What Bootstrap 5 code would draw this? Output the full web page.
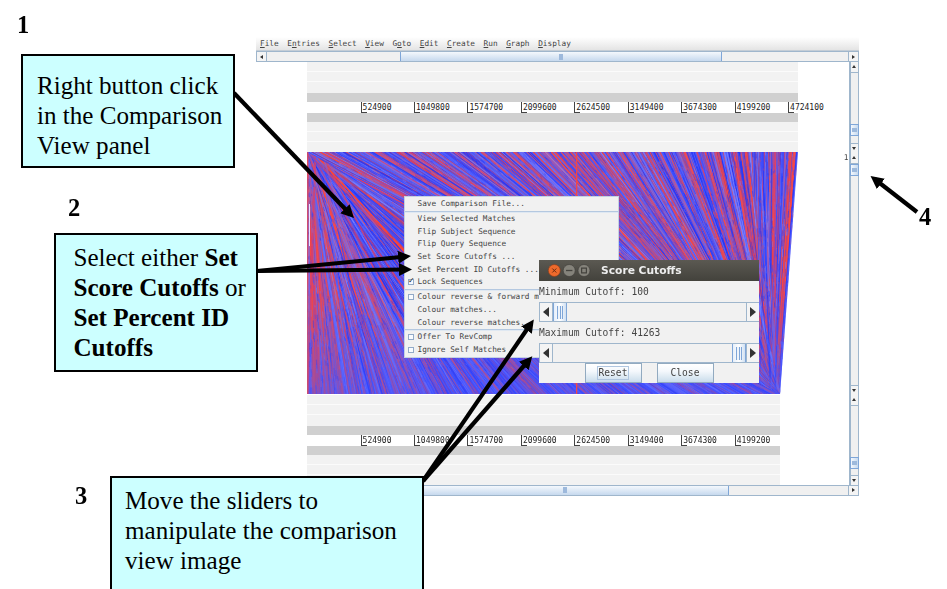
<!DOCTYPE html>
<html lang="en">
<head>
<meta charset="utf-8">
<title>Comparison view: score cutoffs</title>
<link href="https://cdn.jsdelivr.net/npm/bootstrap@5.3.0/dist/css/bootstrap.min.css" rel="stylesheet">
<style>
body{width:947px;height:589px;overflow:hidden;background:#fff;color:#000}
.slide{width:947px;height:589px}
.note{background:#cff;border:2px solid #000;font:25.1px/30px "Liberation Serif",serif;white-space:nowrap;z-index:5}
.note1{left:21px;top:54px;width:214px;height:114px;padding:15px 0 0 14px}
.note2{left:54px;top:233px;width:204px;height:139px;padding:8px 0 0 17.5px}
.note3{left:110px;top:476px;width:314px;height:125px;padding:8px 0 0 13px}
.num{font:bold 24.5px/26px "Liberation Serif",serif;z-index:5}
.arrows{left:0;top:0;z-index:4}
.mono{font-family:"DejaVu Sans Mono",monospace;font-size:7.75px;color:#444;white-space:nowrap}
.appwin{left:256px;top:37px;width:603px;height:459px}
.menus{height:14px;padding:1px 0 0 4px;gap:8.6px;background:linear-gradient(#fff,#e4e4e4);border-bottom:1px solid #c4cdd6}
.menus u{text-underline-offset:1px}
.hbar{height:11px;background:#f0f0f0;border:1px solid #9fb6cc;border-width:1px 0}
.hbar2{height:10.5px}
.cell{flex:none;background:#f4f4f4;display:flex;align-items:center;justify-content:center}
.hbar .cell{width:11px;border:1px solid #9fb6cc;border-width:0 1px}
.hthumb{background:linear-gradient(#f4f8fd,#c6d9ee);border:1px solid #7fa6d8;border-width:0 1px;display:flex;align-items:center;justify-content:center}
.hthumb i{width:4px;height:6px;background:#9db9dc}
.views{height:423px}
.vbar{width:10.5px;background:#f0f0f0;border:1px solid #9fb6cc;border-width:0 1px 0 2px}
.vbar .cell{height:10.5px;border-bottom:1px solid #9fb6cc}
.vbar .cell.dn{border:0;border-top:1px solid #9fb6cc}
.vthumb{flex:none;height:12px;margin-right:-1px;margin-left:-1px;background:linear-gradient(90deg,#f4f8fd,#c6d9ee);border:1px solid #7fa6d8;display:flex;align-items:center;justify-content:center}
.vthumb i{width:5px;height:4px;background:#9db9dc}
.tri{width:0;height:0;border:2.5px solid transparent}
.tri.up{border-bottom:3px solid #333;border-top:0}
.tri.down{border-top:3px solid #333;border-bottom:0}
.tri.left{border-right:3px solid #333;border-left:0}
.tri.right{border-left:3px solid #333;border-right:0}
.seqpanel{height:90px;margin-left:51px}
.lane{height:10px;background:#f2f2f2;border-bottom:1px solid #fbfbfb}
.lane.lastlane{height:11px;border:0}
.dark{height:9px;background:#d0d0d0}
.ruler{height:11px;padding-left:53.6px;background:#fff}
.ruler span{flex:none;width:53.44px;font-size:8px;line-height:12px;height:11px;padding-left:1px;color:#222;border-left:1px solid #444;background:linear-gradient(#444,#444) 0 100%/5px 1px no-repeat}
.compare{height:243px;padding-left:51px}
.popup{left:404px;top:196px;width:215px;height:162px;background:#f1f1f1;border:1px solid #c3d0e2;z-index:2;padding-top:1px}
.popup div{height:12.7px;line-height:12.8px;padding-left:12.5px;position:relative}
.popup hr{margin:0;height:2.2px;border:0;border-top:1px solid #b4c8e0;background:#dfe8f2;opacity:1}
.popup .chk::before{content:"";position:absolute;left:3px;top:2.5px;width:6px;height:6px;border:1px solid #92aac8;background:#f8fbff}
.popup .on::after{content:"✓";position:absolute;left:3px;top:-1px;font:bold 8px/12px "DejaVu Sans",sans-serif;color:#222}
.dialogbox{left:539px;top:260px;width:220px;height:123px;background:#f1f1f1;z-index:3}
.titlebar{height:21px;background:linear-gradient(#5b5952,#43423c);padding-left:8px;gap:1px;color:#eee;font:bold 10.7px/19px "DejaVu Sans",sans-serif}
.lab{font-size:9.6px;height:21px;line-height:21px}
.slider{height:20px;border:1px solid #9fb6cc;border-width:1px 0 1px 1px}
.slider .cell{width:12px}
.track{border:1px solid #9fb6cc;margin:-1px 0}
.slider .hthumb{width:14px;background:linear-gradient(90deg,#e6effa,#fff 50%,#d0e0f2)}
.slider .hthumb i{width:6px;height:13px;background:repeating-linear-gradient(90deg,#7fa6d8 0 1px,#eef4fb 1px 2.5px)}
.slider .tri{border-width:5px}
.slider .tri.left{border-left:0;border-right-width:6px}
.slider .tri.right{border-right:0;border-left-width:6px}
.swbtn{width:57px;height:20px;border:1px solid #92aac0;background:linear-gradient(#fff,#f4f8fc 40%,#c9dceb);font-size:9.6px;display:flex;align-items:center;justify-content:center}
.swbtn span{padding:0 1px;line-height:12px}
.swbtn .foc{outline:1px solid #b0c6e0}
</style>
<script src="https://cdn.jsdelivr.net/npm/bootstrap@5.3.0/dist/js/bootstrap.bundle.min.js"></script>
</head>
<body>
<div class="slide position-relative overflow-hidden">
  <div class="num position-absolute" style="left:17px;top:12px">1</div>
  <div class="num position-absolute" style="left:68px;top:195px">2</div>
  <div class="num position-absolute" style="left:75px;top:483px">3</div>
  <div class="num position-absolute" style="left:919px;top:204px">4</div>
  <div class="note note1 position-absolute">Right button click<br>in the Comparison<br>View panel</div>
  <div class="note note2 position-absolute">Select either <b>Set</b><br><b>Score Cutoffs</b> or<br><b>Set Percent ID</b><br><b>Cutoffs</b></div>
  <div class="note note3 position-absolute">Move the sliders to<br>manipulate the comparison<br>view image</div>

  <div class="appwin mono position-absolute d-flex flex-column">
    <div class="menus d-flex align-items-center"><span><u>F</u>ile</span><span>E<u>n</u>tries</span><span><u>S</u>elect</span><span><u>V</u>iew</span><span>G<u>o</u>to</span><span><u>E</u>dit</span><span><u>C</u>reate</span><span><u>R</u>un</span><span><u>G</u>raph</span><span><u>D</u>isplay</span></div>
    <div class="hbar d-flex"><div class="cell"><b class="tri left"></b></div><div style="width:133px"></div><div class="hthumb" style="width:322px"><i></i></div><div class="cell ms-auto"><b class="tri right"></b></div></div>
    <div class="views d-flex">
      <div class="flex-grow-1 bg-white">
        <div class="seqpanel" style="width:491px">
          <div class="lane"></div><div class="lane"></div><div class="lane lastlane"></div><div class="dark"></div>
          <div class="ruler d-flex"><span>524900</span><span>1049800</span><span>1574700</span><span>2099600</span><span>2624500</span><span>3149400</span><span>3674300</span><span>4199200</span><span>4724100</span></div>
          <div class="dark"></div><div class="lane"></div><div class="lane"></div><div class="lane lastlane"></div>
        </div>
        <div class="compare d-flex"><canvas id="matches" width="491" height="243"></canvas><span class="ms-auto">1</span></div>
        <div class="seqpanel" style="width:473px">
          <div class="lane"></div><div class="lane"></div><div class="lane lastlane"></div><div class="dark"></div>
          <div class="ruler d-flex"><span>524900</span><span>1049800</span><span>1574700</span><span>2099600</span><span>2624500</span><span>3149400</span><span>3674300</span><span>4199200</span></div>
          <div class="dark"></div><div class="lane"></div><div class="lane"></div><div class="lane lastlane"></div>
        </div>
      </div>
      <div class="d-flex flex-column">
        <div class="vbar d-flex flex-column" style="height:91px"><div class="cell"><b class="tri up"></b></div><div style="height:51px"></div><div class="vthumb"><i></i></div><div class="cell dn mt-auto"><b class="tri down"></b></div></div>
        <div class="vbar d-flex flex-column" style="height:242px"><div class="cell"><b class="tri up"></b></div><div class="vthumb"><i></i></div><div class="cell dn mt-auto"><b class="tri down"></b></div></div>
        <div class="vbar d-flex flex-column" style="height:90px"><div class="cell"><b class="tri up"></b></div><div style="height:51px"></div><div class="vthumb"><i></i></div><div class="cell dn mt-auto"><b class="tri down"></b></div></div>
      </div>
    </div>
    <div class="hbar hbar2 d-flex"><div class="cell"><b class="tri left"></b></div><div style="width:133px"></div><div class="hthumb" style="width:329px"><i></i></div><div class="cell ms-auto"><b class="tri right"></b></div></div>
  </div>

  <div class="popup mono position-absolute"><div>Save Comparison File...</div><hr><div>View Selected Matches</div><div>Flip Subject Sequence</div><div>Flip Query Sequence</div><div>Set Score Cutoffs ...</div><div>Set Percent ID Cutoffs ...</div><div class="chk on">Lock Sequences</div><hr><div class="chk">Colour reverse &amp; forward m</div><div>Colour matches...</div><div>Colour reverse matches...</div><hr><div class="chk">Offer To RevComp</div><div class="chk">Ignore Self Matches</div></div>

  <div class="dialogbox mono position-absolute">
    <div class="titlebar d-flex align-items-center">
      <svg width="45" height="16" viewBox="0 0 45 16"><circle cx="7.3" cy="7.5" r="6" fill="#ee6a2c" stroke="#8a3a1a" stroke-width=".6"/><path d="M5.300 5.500l4 4m0-4l-4 4" stroke="#6a2c12" stroke-width="1"/><circle cx="22.2" cy="7.5" r="6" fill="#85837b" stroke="#3c3b37" stroke-width=".6"/><path d="M19 7.500h6.400" stroke="#44433e" stroke-width="1.3"/><circle cx="37" cy="7.5" r="6" fill="#85837b" stroke="#3c3b37" stroke-width=".6"/><path d="M34.600 5.100h4.800v4.800h-4.800z" fill="none" stroke="#44433e" stroke-width="1.2"/></svg>
      <span class="ps-2">Score Cutoffs</span>
    </div>
    <div class="lab">Minimum Cutoff: 100</div>
    <div class="slider d-flex"><div class="cell"><b class="tri left"></b></div><div class="track d-flex flex-grow-1"><div class="hthumb"><i></i></div></div><div class="cell"><b class="tri right"></b></div></div>
    <div class="lab">Maximum Cutoff: 41263</div>
    <div class="slider d-flex"><div class="cell"><b class="tri left"></b></div><div class="track d-flex flex-grow-1 justify-content-end"><div class="hthumb"><i></i></div></div><div class="cell"><b class="tri right"></b></div></div>
    <div class="d-flex justify-content-center" style="gap:15px"><div class="swbtn"><span class="foc">Reset</span></div><div class="swbtn"><span>Close</span></div></div>
  </div>

  <svg class="arrows position-absolute" width="947" height="589" viewBox="0 0 947 589">
    <defs><marker id="head" markerUnits="userSpaceOnUse" markerWidth="14" markerHeight="14" refX="8" refY="7" orient="auto"><path d="M0 .5L13 7 0 13.500z"/></marker></defs>
    <g stroke="#000" stroke-width="4.200" fill="none">
      <path marker-end="url(#head)" d="M234 93L350.500 214.500"/><path marker-end="url(#head)" d="M257 271L406 256.500"/><path marker-end="url(#head)" d="M257 271L407 269.500"/>
      <path marker-end="url(#head)" d="M423 481L531 323.500"/><path marker-end="url(#head)" d="M423 481L529 360"/><path marker-end="url(#head)" d="M917 212L874.500 179"/>
    </g>
  </svg>
</div>
<script>
// Match lines fan out of the top-left corner and converge on the bottom-right one.
(function(){
  var c=document.getElementById('matches').getContext('2d'),W=491,B=473,H=242,s=20117;
  function r(){s=(s*16807)%2147483647;return s/2147483647}
  c.beginPath();c.moveTo(0,0);c.lineTo(W,0);c.lineTo(B,H);c.lineTo(0,H);c.closePath();c.clip();
  c.fillStyle='#5058fa';c.fillRect(0,0,W,H);
  var blues=['#1c34ff','#3448ff','#5062ff','#6470ff','#7880ff','#2834ee','#4450ff'],reds=['#ff4434','#ff4a40','#d8406c','#9c58b8','#f04a50'];
  var bands=[];for(var k=0;k<200;k++)bands.push(.3+r()*1.4);
  function line(a,b,red,w,al){
    c.strokeStyle=(red?reds:blues)[Math.floor(r()*(red?5:7))];
    c.globalAlpha=al;c.lineWidth=w;c.beginPath();c.moveTo(a,0);c.lineTo(b,H);c.stroke();
  }
  function fan(up){
    c.save();c.beginPath();c.moveTo(0,0);
    if(up){c.lineTo(W,0);c.lineTo(B,H)}else{c.lineTo(B,H);c.lineTo(0,H)}
    c.closePath();c.clip();
    for(var i=0;i<1900;i++){
      var t=r(),j=Math.pow(r(),3)*16,p=up?.42:(t<.08?.7:.46-.3*t);
      var a=up?t*W:j,b=up?B-j:t*B;
      if(up&&t>.9)b=B-(1-t)*330*r()-2;
      line(a,b,r()<p*bands[Math.floor(t*199)],.5+Math.pow(r(),2)*1.3,.5+r()*.5);
    }
    c.restore();
  }
  fan(false);fan(true);
  // Short matches break up the long lines into grain.
  for(var i=0;i<6500;i++){
    var x=r()*W,y=r()*H,up=y<x*H/B,dx=up?B-x:x,dy=up?H-y:y,l=Math.hypot(dx,dy)||1,n=2+r()*7;
    c.globalAlpha=.35+r()*.3;c.lineWidth=.8;
    c.strokeStyle=r()<.25?'#e04c60':blues[Math.floor(r()*7)];
    c.beginPath();c.moveTo(x,y);c.lineTo(x+dx/l*n,y+dy/l*n);c.stroke();
  }
  var g=c.createLinearGradient(0,140,0,H);g.addColorStop(0,'rgba(70,84,255,0)');g.addColorStop(1,'rgba(70,84,255,.5)');
  c.globalAlpha=1;c.fillStyle=g;c.fillRect(0,140,W,H);
  c.fillStyle='#f04848';c.fillRect(269,0,1.3,H);
  c.globalAlpha=.7;c.fillRect(0,0,1.5,H);
  c.globalAlpha=1;c.fillStyle='#e8e4ff';c.fillRect(2,52,1,42);
})();
</script>
</body>
</html>
